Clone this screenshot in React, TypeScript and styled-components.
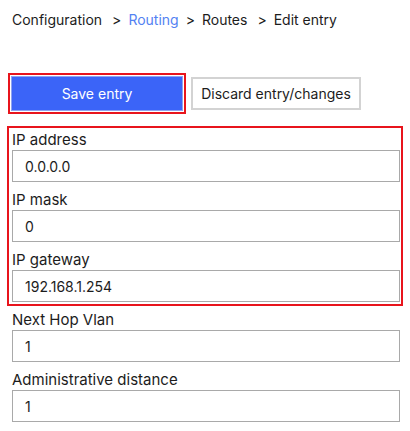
import React from 'react'
import styled, { createGlobalStyle } from 'styled-components'

const GlobalStyle = createGlobalStyle`
    * {
        box-sizing: border-box;
    }

    body {
        margin: 0;
        background: #ffffff;
        font-family: Inter, "Noto Sans", "Liberation Sans", sans-serif;
        color: #1c1c1c;
    }
`

const StyledPage = styled.div`
    padding: 0 10px 0 12px;
`

const StyledBreadcrumb = styled.nav`
    display: flex;
    align-items: center;
    margin-top: 10px;
    height: 20px;
    font-size: 14px;
    line-height: 20px;
    white-space: nowrap;
`

interface CrumbProps {
    link?: boolean
}

const StyledCrumb = styled.span<CrumbProps>`
    color: ${props => props.link ? '#5382f2' : '#1c1c1c'};
    margin-right: ${props => props.link ? '-3px' : '0'};
`

const StyledSeparator = styled.span`
    margin: 0 7px 0 10px;
    color: #1c1c1c;
`

const StyledToolbar = styled.div`
    display: flex;
    align-items: center;
    margin-top: 43px;
`

// red highlight frame around the primary action
const StyledHighlight = styled.div`
    margin-left: -4px;
    padding: 1px;
    border: 2px solid #e8141c;
`

const StyledPrimaryButton = styled.button`
    display: block;
    width: 172px;
    height: 35px;
    padding: 0;
    border: 1px solid #8ea3f0;
    background: #3b64f8;
    color: #ffffff;
    font-family: inherit;
    font-size: 14px;
    cursor: pointer;
`

const StyledSecondaryButton = styled.button`
    margin-left: 5px;
    width: 170px;
    height: 33px;
    padding: 0;
    border: 2px solid #d3d3d3;
    background: #ffffff;
    color: #1c1c1c;
    font-family: inherit;
    font-size: 14px;
    white-space: nowrap;
    cursor: pointer;
`

const StyledForm = styled.form`
    display: flex;
    flex-direction: column;
    gap: 8px;
    margin-top: 16px;
`

const StyledGroup = styled.div`
    display: flex;
    flex-direction: column;
    gap: 8px;
    margin: -4px -3px -4px -5px;
    padding: 2px 1px 2px 3px;
    border: 2px solid #e8141c;
`

const StyledField = styled.label`
    display: flex;
    flex-direction: column;
`

const StyledLabel = styled.span`
    font-size: 15px;
    line-height: 20px;
    color: #1c1c1c;
`

const StyledInput = styled.input`
    width: 100%;
    height: 32px;
    padding: 0 12px;
    border: 1px solid #a9a9a9;
    border-radius: 0;
    background: #ffffff;
    color: #1c1c1c;
    font-family: inherit;
    font-size: 14px;
    outline: none;
`

interface FieldProps {
    label: string
    value: string
}

const Field = ({ label, value }: FieldProps): JSX.Element => (
    <StyledField>
        <StyledLabel>{label}</StyledLabel>
        <StyledInput defaultValue={value} />
    </StyledField>
)

const App = (): JSX.Element => {
    return (
        <StyledPage>
            <GlobalStyle />
            <StyledBreadcrumb>
                <StyledCrumb>Configuration</StyledCrumb>
                <StyledSeparator>&gt;</StyledSeparator>
                <StyledCrumb link>Routing</StyledCrumb>
                <StyledSeparator>&gt;</StyledSeparator>
                <StyledCrumb>Routes</StyledCrumb>
                <StyledSeparator>&gt;</StyledSeparator>
                <StyledCrumb>Edit entry</StyledCrumb>
            </StyledBreadcrumb>
            <StyledToolbar>
                <StyledHighlight>
                    <StyledPrimaryButton type="button">Save entry</StyledPrimaryButton>
                </StyledHighlight>
                <StyledSecondaryButton type="button">Discard entry/changes</StyledSecondaryButton>
            </StyledToolbar>
            <StyledForm>
                <StyledGroup>
                    <Field label="IP address" value="0.0.0.0" />
                    <Field label="IP mask" value="0" />
                    <Field label="IP gateway" value="192.168.1.254" />
                </StyledGroup>
                <Field label="Next Hop Vlan" value="1" />
                <Field label="Administrative distance" value="1" />
            </StyledForm>
        </StyledPage>
    )
}

export default App
